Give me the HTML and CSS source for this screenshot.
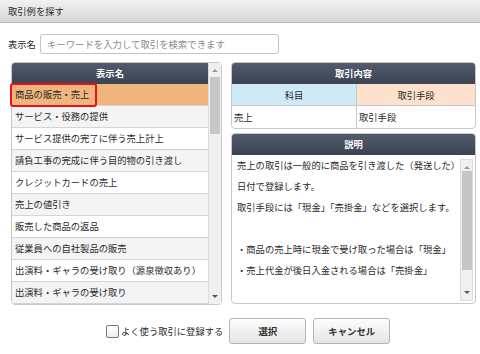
FILE: index.html
```html
<!DOCTYPE html>
<html lang="ja">
<head>
    <meta charset="UTF-8">
    <title>取引例を探す</title>
    <link rel="stylesheet" href="styles.css">
</head>
<body>
    <div class="titlebar">取引例を探す</div>

    <div class="search-row">
        <label class="search-label">表示名</label>
        <input class="search-input" type="text" placeholder="キーワードを入力して取引を検索できます">
    </div>

    <div class="main">
        <div class="panel list-panel">
            <div class="list">
                <div class="panel-head">表示名</div>
                <div class="list-row selected">商品の販売・売上</div>
                <div class="list-row">サービス・役務の提供</div>
                <div class="list-row">サービス提供の完了に伴う売上計上</div>
                <div class="list-row">請負工事の完成に伴う目的物の引き渡し</div>
                <div class="list-row">クレジットカードの売上</div>
                <div class="list-row">売上の値引き</div>
                <div class="list-row">販売した商品の返品</div>
                <div class="list-row">従業員への自社製品の販売</div>
                <div class="list-row">出演料・ギャラの受け取り（源泉徴収あり）</div>
                <div class="list-row">出演料・ギャラの受け取り</div>
            </div>
            <div class="scrollbar">
                <span class="arrow up"></span>
                <span class="thumb list-thumb"></span>
                <span class="arrow down"></span>
            </div>
            <div class="highlight"></div>
        </div>

        <div class="side">
            <div class="panel detail-panel">
                <div class="panel-head">取引内容</div>
                <div class="detail-grid">
                    <div class="sub-head subject">科目</div>
                    <div class="sub-head method">取引手段</div>
                    <div class="detail-cell">売上</div>
                    <div class="detail-cell">取引手段</div>
                </div>
            </div>

            <div class="panel desc-panel">
                <div class="panel-head">説明</div>
                <div class="desc-body">
                    <div class="desc-text">
                        <p>売上の取引は一般的に商品を引き渡した（発送した）</p>
                        <p>日付で登録します。</p>
                        <p>取引手段には「現金」「売掛金」などを選択します。</p>
                        <p>&nbsp;</p>
                        <p>・商品の売上時に現金で受け取った場合は「現金」</p>
                        <p>・売上代金が後日入金される場合は「売掛金」</p>
                    </div>
                    <div class="scrollbar">
                        <span class="arrow up"></span>
                        <span class="thumb desc-thumb"></span>
                        <span class="arrow down"></span>
                    </div>
                </div>
            </div>
        </div>
    </div>

    <div class="footer">
        <label class="check">
            <span class="check-box"></span>
            よく使う取引に登録する
        </label>
        <button class="btn">選択</button>
        <button class="btn">キャンセル</button>
    </div>
</body>
</html>
```

FILE: styles.css
```css
* {
    margin: 0;
    padding: 0;
    box-sizing: border-box;
    font-family: "Noto Sans CJK JP", "Noto Sans", sans-serif;
}

body {
    width: 480px;
    height: 354px;
    background: #fff;
    color: #2a2a2a;
    font-size: 9.3px;
    overflow: hidden;
}

.titlebar {
    height: 23px;
    padding-left: 8px;
    line-height: 22px;
    background: linear-gradient(#f2f2f2, #d6d6d6);
    border-bottom: 1px solid #b8b8b8;
}

.search-row {
    display: flex;
    align-items: center;
    gap: 4px;
    padding: 10px 0 0 8px;
    height: 31px;
}

.search-input {
    width: 239px;
    height: 20px;
    border: 1px solid #c4c4c4;
    border-radius: 3px;
    padding-left: 6px;
    font-size: 9.4px;
    color: #333;
    outline: none;
}

.search-input::placeholder {
    color: #8a8a8a;
}

.main {
    display: flex;
    gap: 9px;
    padding: 8px 0 0 11px;
    height: 250px;
}

.panel {
    border: 1px solid #c8c8c8;
    border-radius: 4px;
    overflow: hidden;
    background: #fff;
}

.panel-head {
    height: 21px;
    line-height: 21px;
    text-align: center;
    color: #fff;
    font-weight: bold;
    background: linear-gradient(#525a6d, #3b4252);
}

.list-panel {
    position: relative;
    width: 211px;
    height: 243px;
    display: flex;
    overflow: visible;
}

.list {
    flex: 1;
    overflow: hidden;
    border-radius: 3px 0 0 3px;
}

.list-row {
    height: 22px;
    line-height: 21px;
    padding-left: 3px;
    border-bottom: 1px solid #d4d4d4;
    white-space: nowrap;
}

.list-row:nth-child(odd) {
    background: #f4f4f4;
}

.list-row.selected {
    background: #efb57c;
}

.highlight {
    position: absolute;
    left: -2px;
    top: 20px;
    width: 87px;
    height: 24px;
    border: 2px solid #e8101a;
    border-radius: 3px;
}

.scrollbar {
    position: relative;
    width: 13px;
    background: #f0f0f0;
    border-left: 1px solid #dcdcdc;
}

.arrow {
    position: absolute;
    left: 3px;
    width: 0;
    height: 0;
    border-left: 3px solid transparent;
    border-right: 3px solid transparent;
}

.arrow.up {
    top: 6px;
    border-bottom: 3px solid #999;
}

.arrow.down {
    bottom: 6px;
    border-top: 3px solid #555;
}

.thumb {
    position: absolute;
    left: 1px;
    width: 10px;
    background: #c6c6c6;
}

.list-thumb {
    top: 14px;
    height: 57px;
}

.desc-thumb {
    top: 11px;
    height: 99px;
}

.side {
    width: 245px;
    display: flex;
    flex-direction: column;
    gap: 4px;
}

.detail-panel {
    height: 68px;
}

.detail-grid {
    display: grid;
    grid-template-columns: 124px 1fr;
}

.sub-head {
    height: 22px;
    line-height: 22px;
    text-align: center;
    border-bottom: 1px solid #c8c8c8;
}

.subject {
    background: #cdeaf6;
}

.method {
    background: #fde1cc;
    border-left: 1px solid #c8c8c8;
}

.detail-cell {
    height: 23px;
    line-height: 22px;
    padding-left: 2px;
}

.detail-cell + .detail-cell {
    border-left: 1px solid #c8c8c8;
}

.desc-panel {
    height: 172px;
}

.desc-body {
    display: flex;
    height: 149px;
}

.desc-text {
    flex: 1;
    padding: 0 0 0 5px;
    line-height: 21px;
    white-space: nowrap;
}

.desc-body .scrollbar {
    margin: 4px 2px 3px 0;
    border: 1px solid #dcdcdc;
}

.footer {
    display: flex;
    align-items: center;
    padding: 14px 0 0 106px;
}

.check {
    display: flex;
    align-items: center;
    gap: 2px;
    margin-right: 6px;
}

.check-box {
    width: 13px;
    height: 13px;
    border: 1px solid #777;
    border-radius: 2px;
    background: linear-gradient(#fff, #eee);
}

.btn {
    width: 77px;
    height: 26px;
    margin-right: 7px;
    border: 1px solid #b4b4b4;
    border-radius: 3px;
    background: linear-gradient(#fdfdfd, #e4e4e4);
    color: #333;
    font-size: 9.4px;
    font-weight: bold;
}
```
